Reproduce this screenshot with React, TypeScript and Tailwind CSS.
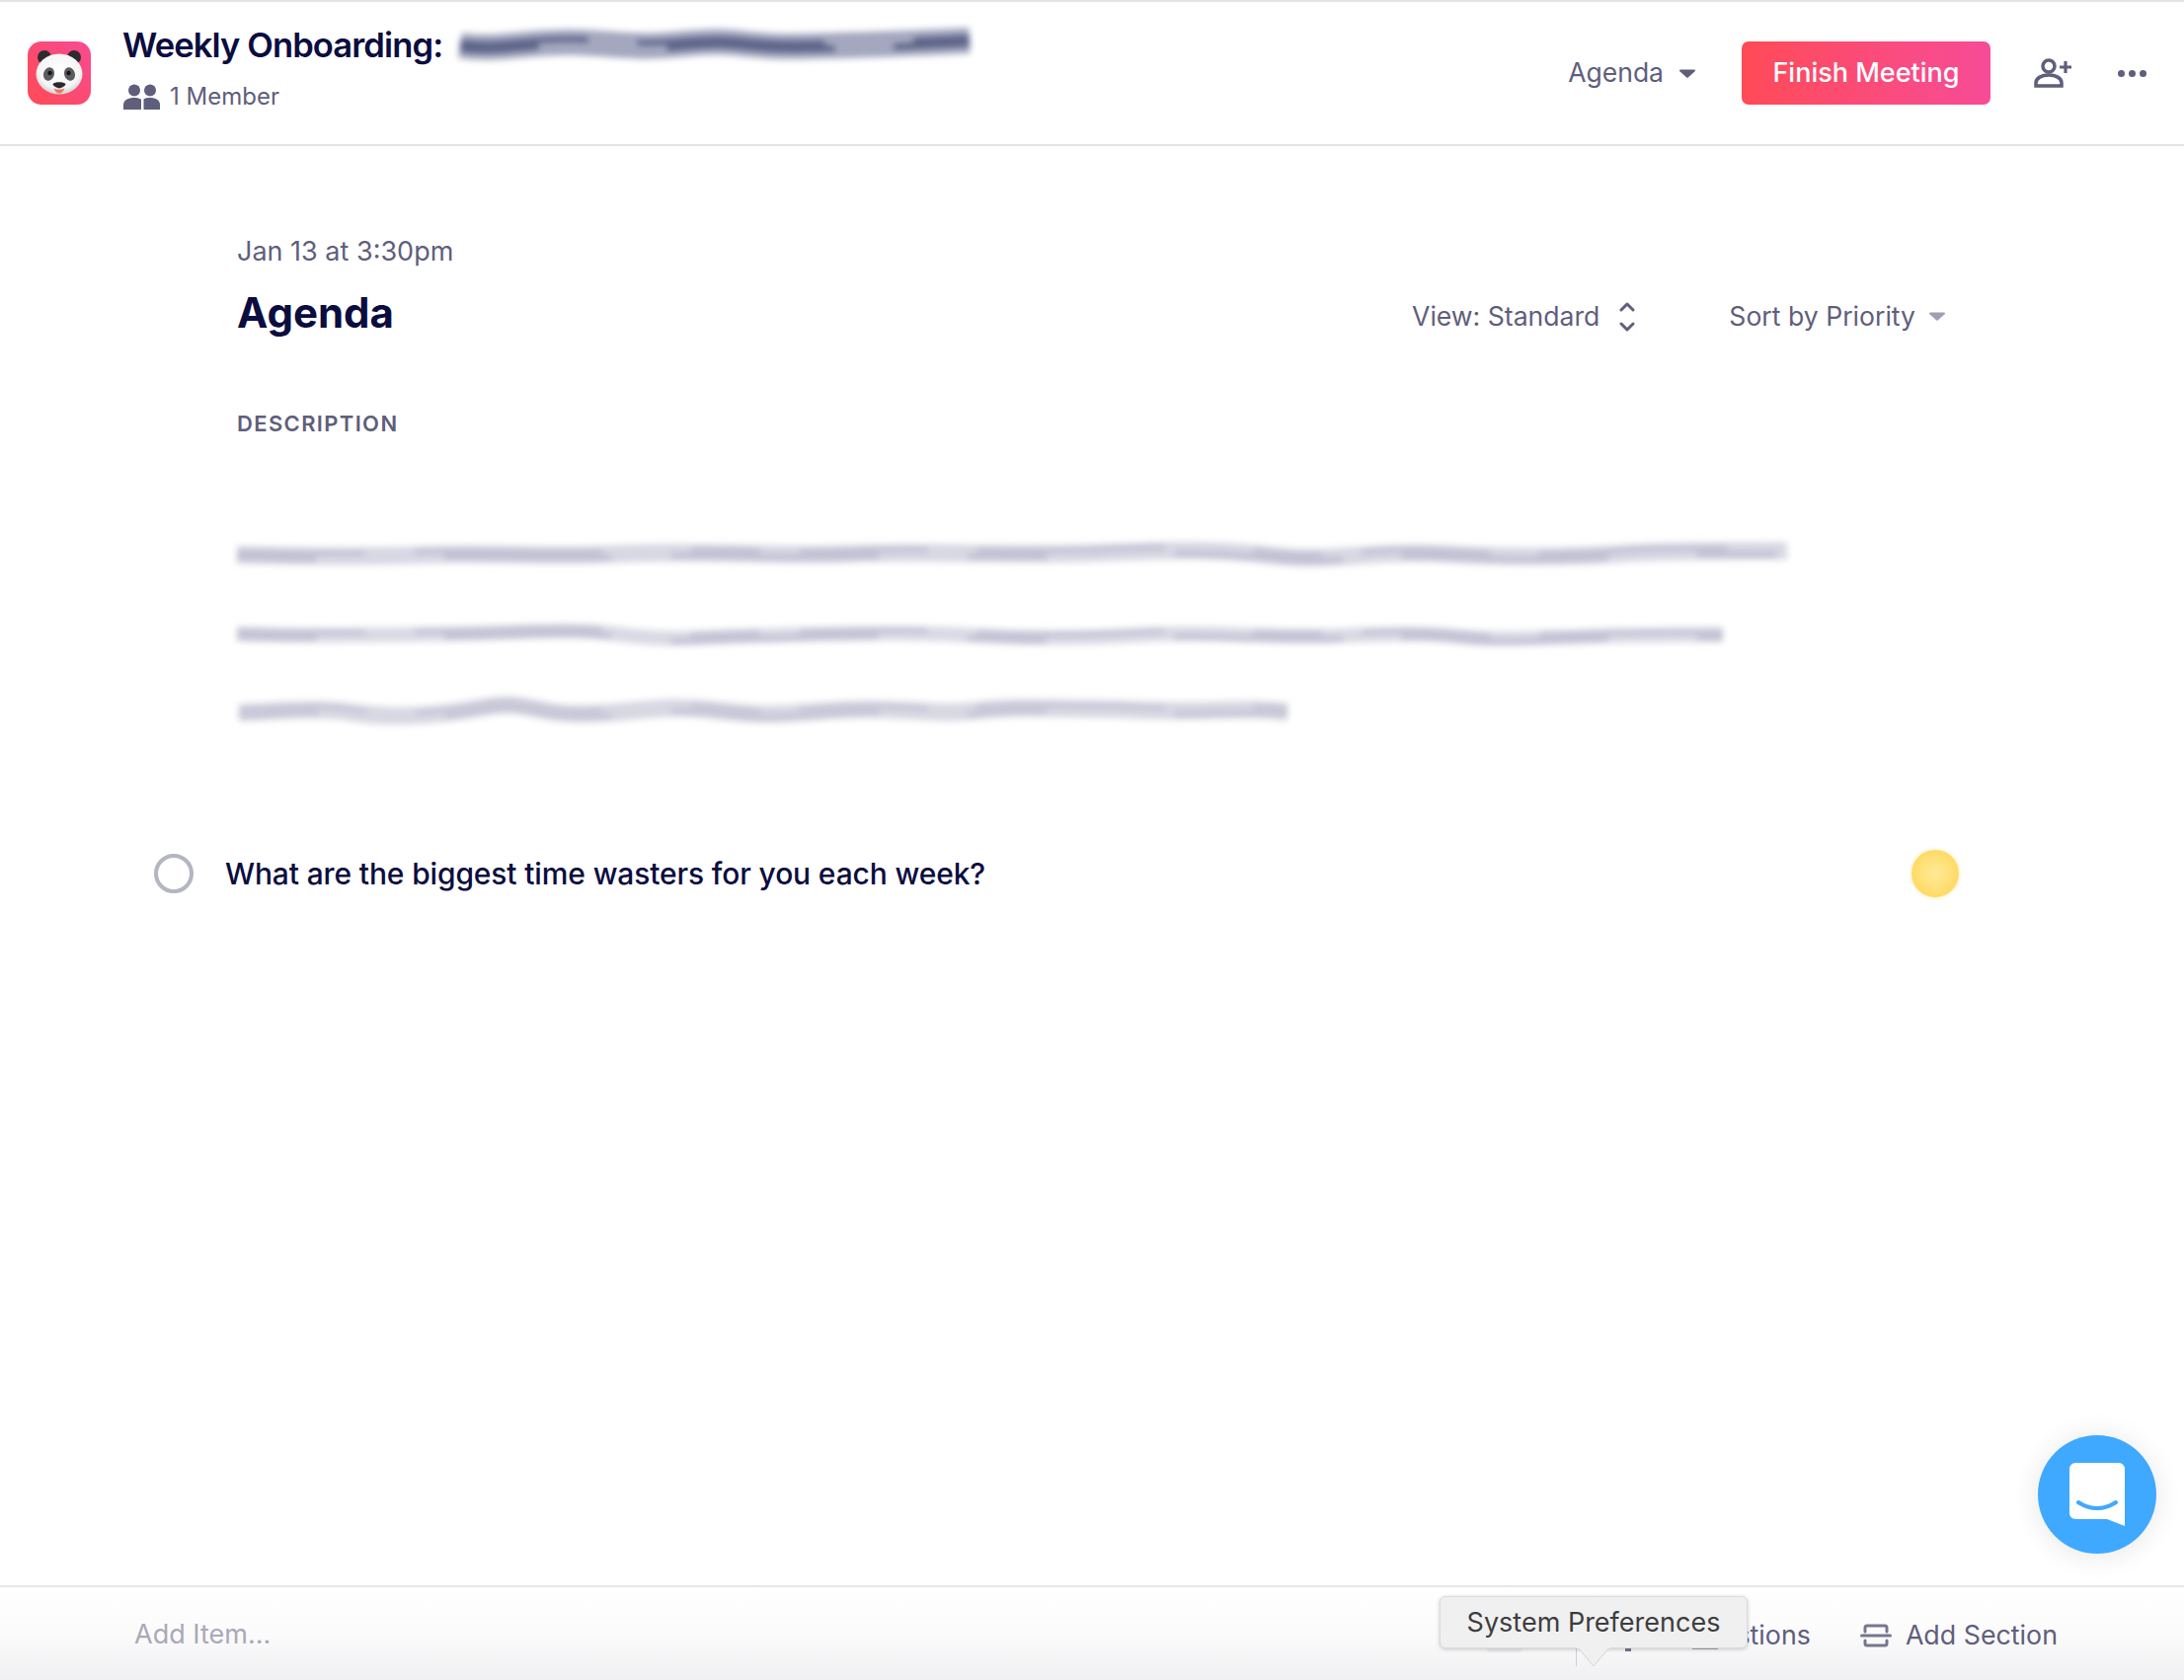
const Panda = () => (
  <svg width="64" height="64" viewBox="0 0 64 64">
    <defs>
      <linearGradient id="pandaBg" x1="0" y1="1" x2="1" y2="0">
        <stop offset="0" stopColor="#ff4a55" />
        <stop offset="1" stopColor="#f74b93" />
      </linearGradient>
      <radialGradient id="pandaFace" cx="0.5" cy="0.4" r="0.65">
        <stop offset="0" stopColor="#ffffff" />
        <stop offset="0.7" stopColor="#f4f4f4" />
        <stop offset="1" stopColor="#c4c4c9" />
      </radialGradient>
    </defs>
    <rect width="64" height="64" rx="14" fill="url(#pandaBg)" />
    <circle cx="17" cy="16" r="7" fill="#2e2b30" />
    <circle cx="47" cy="16" r="7" fill="#2e2b30" />
    <ellipse cx="32" cy="33" rx="23.500" ry="20.500" fill="url(#pandaFace)" />
    <ellipse cx="21.500" cy="33" rx="5.400" ry="6.800" fill="#5a5a61" transform="rotate(18 21.500 33)" />
    <ellipse cx="42.500" cy="33" rx="5.400" ry="6.800" fill="#5a5a61" transform="rotate(-18 42.500 33)" />
    <circle cx="22.500" cy="32" r="2.200" fill="#141318" />
    <circle cx="41.500" cy="32" r="2.200" fill="#141318" />
    <path d="M25.500 43c2-2.500 11-2.500 13 0 0 2-4 4-6.500 4.500-2.500-.5-6.500-2.500-6.500-4.500z" fill="#2b282e" />
    <path d="M26.500 47.500c3 1.600 8 1.600 11 0-1 3-3.500 5-5.500 5s-4.500-2-5.500-5z" fill="#f2705f" />
  </svg>
);

const MembersIcon = () => (
  <svg width="37" height="26" viewBox="0 0 37 26" fill="#5f5e7c">
    <circle cx="11" cy="6.500" r="6" />
    <circle cx="27" cy="6.500" r="6" />
    <path d="M0 26v-5c0-4.500 5-7 11-7 3 0 5.500.6 7 1.800V26H0z" />
    <path d="M20.500 26V15.400C22 14.500 24.500 14 27 14c5.500 0 10 2.500 10 7v5H20.500z" />
  </svg>
);

const Caret = ({ color = '#5f5e7c' }: { color?: string }) => (
  <svg width="16" height="9" viewBox="0 0 16 9">
    <path d="M1 0.500h14a1 1 0 0 1 .7 1.700L8.700 8.500a1 1 0 0 1-1.400 0L.3 2.200A1 1 0 0 1 1 .5z" fill={color} />
  </svg>
);

interface SmudgeProps {
  width: number;
  d: string;
  base: string;
  streak: string;
  strokeWidth: number;
}

// smudged out text from the original screenshot
const Smudge = ({ width, d, base, streak, strokeWidth }: SmudgeProps) => (
  <svg width={width} height="40" viewBox={`0 0 ${width} 40`} className="block overflow-visible blur-[3px]">
    <path d={d} fill="none" stroke={base} strokeWidth={strokeWidth} />
    <path d={d} transform="translate(0 -3)" fill="none" stroke={streak} strokeWidth="5" strokeDasharray="130 50 190 90 70 40" />
    <path d={d} transform="translate(0 3)" fill="none" stroke={streak} strokeWidth="6" strokeDasharray="80 130 170 60 210 90" />
  </svg>
);

const App = () => {
  return (
    <div className="relative flex h-[1702px] w-full flex-col overflow-hidden bg-white font-['Inter','Liberation_Sans',sans-serif]">
      <header className="flex h-[148px] flex-none items-center border-t-2 border-b-2 border-t-[#e4e4e4] border-b-[#e4e4e6] pr-[38px] pl-[28px]">
        <Panda />
        <div className="mt-[23px] ml-[32px] flex flex-col self-start">
          <div className="flex h-[40px] items-center">
            <span className="text-[34.600px] leading-[40px] font-semibold tracking-[-0.9px] text-[#0b0d3f]">Weekly Onboarding:</span>
            <div className="ml-[14px]">
              <Smudge
                width={524}
                base="#a4a8bf"
                streak="#596085"
                strokeWidth={26}
                d="M4 21c40 6 70-5 120-3s60 6 110 1 60 4 110 3 100-2 176-6"
              />
            </div>
          </div>
          <div className="mt-[20px] ml-px flex h-[26px] items-center">
            <MembersIcon />
            <span className="ml-[10px] text-[24px] leading-[26px] text-[#5f5e7c]">1 Member</span>
          </div>
        </div>
        <div className="ml-auto flex items-center">
          <span className="text-[26.500px] text-[#5f5e7c]">Agenda</span>
          <div className="ml-[16px]">
            <Caret />
          </div>
          <button className="ml-[47px] flex h-[64px] w-[252px] items-center justify-center rounded-[7px] bg-gradient-to-r from-[#ff4a55] to-[#f74b97] text-[27px] font-medium text-white">
            Finish Meeting
          </button>
          <svg className="ml-[44px]" width="40" height="30" viewBox="0 0 40 30" fill="none" stroke="#5f5e7c" strokeWidth="3.500">
            <circle cx="15" cy="8" r="6" />
            <path d="M2 28v-3c0-5 6-8 13-8s13 3 13 8v3H2z" />
            <path d="M32 3v12M26 9h12" strokeWidth="3.200" />
          </svg>
          <div className="ml-[45px] flex gap-[4px]">
            <span className="h-[7px] w-[7px] rounded-full bg-[#5f5e7c]" />
            <span className="h-[7px] w-[7px] rounded-full bg-[#5f5e7c]" />
            <span className="h-[7px] w-[7px] rounded-full bg-[#5f5e7c]" />
          </div>
        </div>
      </header>

      <main className="flex flex-1 flex-col pl-[240px]">
        <div className="mt-[91px] text-[27px] leading-[32px] text-[#5f5e7c]">Jan 13 at 3:30pm</div>
        <div className="mt-[18px] flex h-[56px] items-center pr-[242px]">
          <h1 className="text-[42px] leading-[56px] font-bold text-[#0b0d3f]">Agenda</h1>
          <div className="mt-[8px] ml-auto flex items-center text-[26.600px] text-[#5f5e7c]">
            <span>View: Standard</span>
            <svg className="ml-[20px]" width="16" height="32" viewBox="0 0 16 32" fill="none" stroke="#5f5e7c" strokeWidth="3" strokeLinecap="round" strokeLinejoin="round">
              <path d="M2 9l6-6 6 6M2 23l6 6 6-6" />
            </svg>
            <span className="ml-[95px]">Sort by Priority</span>
            <div className="ml-[14px]">
              <Caret color="#a09fb4" />
            </div>
          </div>
        </div>
        <div className="mt-[70px] text-[22px] leading-[28px] font-semibold tracking-[1.350px] text-[#5f5e7c]">DESCRIPTION</div>
        <div className="mt-[99px] flex flex-col gap-[40px]">
          <Smudge
            width={1570}
            base="#d8d8e4"
            streak="#c0c0d2"
            strokeWidth={18}
            d="M0 20c60 1 120 3 190 0s120 3 200-1 160 3 230 0 170 2 250-1 120-4 180 3 100-6 170-2 120 4 180 0 100-2 170-3"
          />
          <Smudge
            width={1505}
            base="#dadae5"
            streak="#c2c2d4"
            strokeWidth={15}
            d="M0 20c80 3 150 1 220 0s120-6 170 1 90 2 140 1 120-5 200-1 120 4 190 0 120 4 200 1 90-2 130 2 110-4 255-3"
          />
          <Smudge
            width={1070}
            base="#d8d8e3"
            streak="#c6c6d6"
            strokeWidth={18}
            d="M2 20c40-1 76-6 116 0s80 4 130-5 50 8 110 6 70-10 130-3 70 2 130-1 80 6 130 1 70-2 112-2 60 3 110 2 60-2 94 1"
          />
        </div>
        <div className="mt-[119px] -ml-[84px] flex h-[48px] items-center pr-[228px]">
          <span className="h-[40px] w-[40px] flex-none rounded-full border-[4px] border-[#b3b5c2]" />
          <span className="ml-[32px] text-[30px] font-medium tracking-[-0.140px] text-[#0b0d3f]">
            What are the biggest time wasters for you each week?
          </span>
          <span className="ml-auto h-[48px] w-[48px] flex-none rounded-full bg-[radial-gradient(ellipse_at_center,#ffe996_0%,#ffe27c_40%,#fdd24e_100%)] shadow-[0_0_4px_#ffe9a0]" />
        </div>
      </main>

      <footer className="flex h-[96px] flex-none items-center border-t-2 border-t-[#e6e6e8] bg-gradient-to-b from-white via-[#fbfbfc] to-[#f0f0f2] pt-[3px] pr-[128px] pl-[136px]">
        <span className="text-[27px] text-[#a9a9b8]">Add Item...</span>
        <div className="ml-auto flex items-center text-[26.800px] text-[#5f5e7c]">
          <span>Add Questions</span>
          <svg className="ml-[50px]" width="32" height="24" viewBox="0 0 32 24" fill="none" stroke="#77768f" strokeWidth="3" strokeLinecap="round">
            <path d="M5 8V4a2 2 0 0 1 2-2h18a2 2 0 0 1 2 2v4" />
            <path d="M1.500 12h29" />
            <path d="M5 17v3a2 2 0 0 0 2 2h18a2 2 0 0 0 2-2v-3" />
          </svg>
          <span className="ml-[14px]">Add Section</span>
        </div>
      </footer>

      {/* chat launcher */}
      <div className="absolute top-[1454px] left-[2064px] flex h-[120px] w-[120px] items-center justify-center rounded-full bg-[#3fa9ff] shadow-[0_2px_28px_rgba(0,0,0,0.1)]">
        <svg width="56" height="64" viewBox="0 0 56 64">
          <path d="M6 0h44a6 6 0 0 1 6 6v58l-18-7H6a6 6 0 0 1-6-6V6a6 6 0 0 1 6-6z" fill="#fff" />
          <path d="M9 40c12 8 26 8 38 0" fill="none" stroke="#3fa9ff" strokeWidth="4" strokeLinecap="round" />
        </svg>
      </div>

      {/* bits of the hidden toolbar icons that show below the dock tooltip */}
      <span className="absolute top-[1670px] left-[1506px] h-[4px] w-[36px] rounded-b-full bg-[#ececee]" />
      <span className="absolute top-[1670px] left-[1596px] h-[18px] w-px bg-[#cfcfd3]" />
      <span className="absolute top-[1670px] left-[1646px] h-[3px] w-[6px] bg-[#77768f]" />
      <span className="absolute top-[1670px] left-[1714px] h-px w-[26px] bg-[#a0a0b0]" />

      {/* dock tooltip */}
      <div className="absolute top-[1617px] left-[1458px] flex h-[53px] w-[312px] items-center justify-center rounded-[6px] border border-[#dcdcdc] bg-[#f0f0f0] pt-px text-[27px] text-[#3d3d3f] shadow-[0_1px_4px_rgba(0,0,0,0.2)]">
        System Preferences
      </div>
      <svg className="absolute top-[1669px] left-[1597px]" width="34" height="20" viewBox="0 0 34 20">
        <path d="M1 0l16 19 16-19z" fill="#f0f0f0" stroke="#d4d4d6" strokeWidth="1" />
        <path d="M0 0h34" stroke="#f0f0f0" strokeWidth="2" />
      </svg>
    </div>
  );
};

export default App;
